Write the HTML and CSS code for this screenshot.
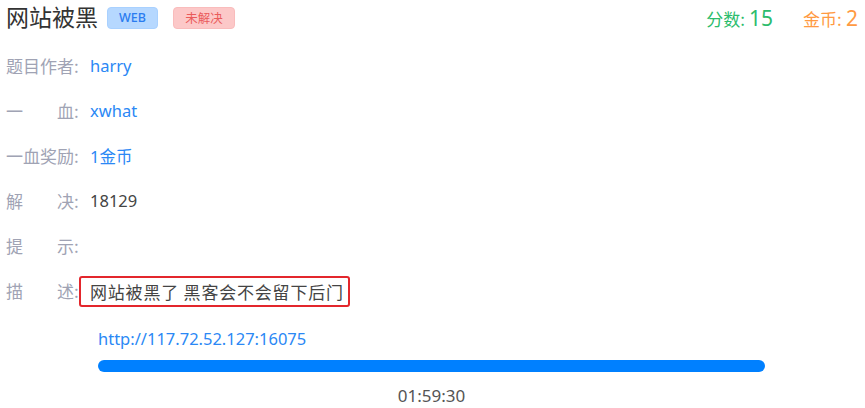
FILE: index.html
```html
<!DOCTYPE html>
<html lang="zh">
<head>
<meta charset="utf-8">
<link rel="stylesheet" href="styles.css">
</head>
<body>
<div class="page">
  <div class="header">
    <div class="title-wrap">
      <span class="title">网站被黑</span>
      <span class="tag tag-blue">WEB</span>
      <span class="tag tag-red">未解决</span>
    </div>
    <div class="stats">
      <span class="stat green"><span class="stat-label">分数:</span> <span class="stat-num">15</span></span>
      <span class="stat orange"><span class="stat-label">金币:</span> <span class="stat-num">2</span></span>
    </div>
  </div>
  <div class="row"><span class="label"><span class="lt">题目作者</span>:</span><span class="value blue">harry</span></div>
  <div class="row"><span class="label"><span class="lt">一血</span>:</span><span class="value blue">xwhat</span></div>
  <div class="row"><span class="label"><span class="lt">一血奖励</span>:</span><span class="value blue">1金币</span></div>
  <div class="row"><span class="label"><span class="lt">解决</span>:</span><span class="value">18129</span></div>
  <div class="row"><span class="label"><span class="lt">提示</span>:</span><span class="value"></span></div>
  <div class="row"><span class="label"><span class="lt">描述</span>:</span><span class="value desc">网站被黑了 黑客会不会留下后门</span></div>
  <div class="env">
    <div class="url">http://117.72.52.127:16075</div>
    <div class="bar"></div>
    <div class="time">01:59:30</div>
  </div>
</div>
</body>
</html>
```

FILE: styles.css
```css
html, body {
  margin: 0;
  padding: 0;
  background: #fff;
}
body {
  font-family: "Noto Sans", "Noto Sans CJK SC", sans-serif;
  color: #333;
}
.page {
  padding: 0 7px 0 6px;
}
.header {
  display: flex;
  justify-content: space-between;
  align-items: flex-start;
  height: 43px;
}
.title-wrap {
  display: flex;
  align-items: center;
  height: 36px;
  margin-top: 1px;
}
.title {
  font-family: "Noto Sans CJK SC", sans-serif;
  font-size: 23px;
  line-height: 30px;
  color: #333;
  margin-top: -6px;
}
.tag {
  display: inline-block;
  height: 22px;
  line-height: 20px;
  font-size: 12.5px;
  border-radius: 4px;
  margin-top: -2px;
  box-sizing: border-box;
  text-align: center;
  padding: 0;
}
.tag-blue {
  background: #b6d8ff;
  color: #2a7cf0;
  border: 1px solid #a9d1ff;
  width: 51px;
  font-family: "Noto Sans", sans-serif;
  font-weight: 500;
  margin-left: 9px;
}
.tag-red {
  background: #fcc8c8;
  color: #ea5b5b;
  border: 1px solid #f9bcbc;
  width: 62px;
  margin-left: 15px;
  font-family: "Noto Sans CJK SC", sans-serif;
}
.stats {
  display: flex;
  gap: 30px;
  height: 36px;
  align-items: center;
}
.stat {
  white-space: nowrap;
}
.stat-label {
  font-size: 17px;
  font-family: "Noto Sans CJK SC", sans-serif;
}
.stat-num {
  font-size: 21px;
}
.green { color: #2cbc6c; }
.orange { color: #ff9a42; }
.row {
  display: flex;
  align-items: center;
  height: 45px;
  font-size: 17px;
}
.label {
  display: flex;
  width: 84px;
  flex: none;
  color: #a0a3b4;
  font-family: "Noto Sans CJK SC", sans-serif;
}
.lt {
  display: inline-block;
  width: 68px;
  text-align: justify;
  text-align-last: justify;
}
.value {
  color: #444;
  font-size: 16.5px;
}
.blue {
  color: #2b88f5;
}
.desc {
  font-family: "Noto Sans CJK SC", sans-serif;
  font-size: 17px;
  letter-spacing: 0.8px;
  color: #444;
  border: 2px solid #e3262c;
  border-radius: 3px;
  padding: 0 4px 0 9px;
  margin-left: -11px;
  height: 31px;
  line-height: 27px;
  box-sizing: border-box;
  margin-top: 1px;
}
.env {
  padding-left: 92px;
  width: 667px;
  padding-top: 14px;
}
.url {
  font-size: 16.5px;
  color: #2b88f5;
  line-height: 24px;
}
.bar {
  height: 12px;
  background: #0080ff;
  border-radius: 6px;
  margin-top: 9px;
}
.time {
  text-align: center;
  font-size: 17px;
  color: #555;
  margin-top: 14px;
  line-height: 20px;
}
```
